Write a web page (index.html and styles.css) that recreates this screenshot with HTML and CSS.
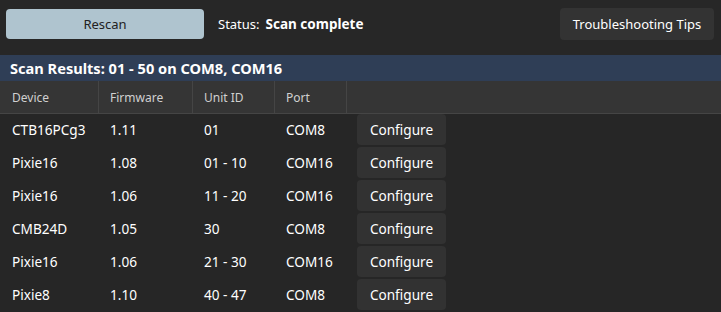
FILE: index.html
```html
<!DOCTYPE html>
<html>
<head>
<meta charset="utf-8">
<link rel="stylesheet" href="styles.css">
</head>
<body>
<div class="app">
  <div class="toolbar">
    <button class="btn rescan">Rescan</button>
    <div class="status">Status:<b>Scan complete</b></div>
    <button class="btn tips">Troubleshooting Tips</button>
  </div>
  <div class="results-title">Scan Results: 01 - 50 on COM8, COM16</div>
  <div class="thead">
    <div class="th">Device</div>
    <div class="th">Firmware</div>
    <div class="th">Unit ID</div>
    <div class="th">Port</div>
    <div class="th"></div>
  </div>
  <div class="tbody">
    <div class="tr"><div class="td">CTB16PCg3</div><div class="td">1.11</div><div class="td">01</div><div class="td">COM8</div><div class="td act"><button class="btn cfg">Configure</button></div></div>
    <div class="tr"><div class="td">Pixie16</div><div class="td">1.08</div><div class="td">01 - 10</div><div class="td">COM16</div><div class="td act"><button class="btn cfg">Configure</button></div></div>
    <div class="tr"><div class="td">Pixie16</div><div class="td">1.06</div><div class="td">11 - 20</div><div class="td">COM16</div><div class="td act"><button class="btn cfg">Configure</button></div></div>
    <div class="tr"><div class="td">CMB24D</div><div class="td">1.05</div><div class="td">30</div><div class="td">COM8</div><div class="td act"><button class="btn cfg">Configure</button></div></div>
    <div class="tr"><div class="td">Pixie16</div><div class="td">1.06</div><div class="td">21 - 30</div><div class="td">COM16</div><div class="td act"><button class="btn cfg">Configure</button></div></div>
    <div class="tr"><div class="td">Pixie8</div><div class="td">1.10</div><div class="td">40 - 47</div><div class="td">COM8</div><div class="td act"><button class="btn cfg">Configure</button></div></div>
  </div>
</div>
</body>
</html>
```
FILE: styles.css
```css
* { box-sizing: border-box; }
html, body {
  margin: 0;
  padding: 0;
  background: #272727;
  font-family: "Noto Sans", "Open Sans", sans-serif;
  color: #ffffff;
  overflow: hidden;
}
.app {
  width: 721px;
  height: 312px;
  display: flex;
  flex-direction: column;
}
.toolbar {
  height: 55px;
  display: flex;
  align-items: flex-start;
  padding: 8px 7px 0 6px;
}
.btn {
  font-family: inherit;
  border: none;
  border-radius: 4px;
  cursor: pointer;
  padding: 0;
}
.rescan {
  margin-top: 1px;
  width: 198px;
  height: 30px;
  background: #afc4cf;
  color: #222222;
  font-size: 13px;
}
.status {
  margin-left: 14px;
  height: 32px;
  display: flex;
  align-items: center;
  gap: 6px;
  font-size: 13px;
  color: #ffffff;
}
.status b { font-weight: 700; font-size: 13.5px; }
.tips {
  margin-left: auto;
  width: 154px;
  height: 32px;
  background: #333333;
  color: #ffffff;
  font-size: 13px;
}
.results-title {
  height: 26px;
  background: #2f3e56;
  padding-left: 10px;
  display: flex;
  align-items: center;
  font-weight: 700;
  font-size: 14.6px;
  color: #ffffff;
}
.thead {
  display: grid;
  grid-template-columns: 98px 94px 82px 72px 1fr;
  height: 33px;
  background: #353535;
  border-bottom: 1px solid #454545;
}
.th {
  display: flex;
  align-items: center;
  padding-left: 11px;
  font-size: 12px;
  color: #d0d0d0;
  border-left: 1px solid #454545;
}
.th:first-child { padding-left: 12px; border-left: none; }
.tbody {
  display: flex;
  flex-direction: column;
  gap: 2px;
  background: #262626;
  flex: 1;
}
.tr {
  display: grid;
  grid-template-columns: 98px 94px 82px 72px 1fr;
  height: 31px;
  align-items: center;
}
.td {
  padding-left: 12px;
  font-size: 13.6px;
  color: #ffffff;
}
.td.act { padding-left: 11px; }
.cfg {
  width: 89px;
  height: 31px;
  background: #323232;
  color: #ffffff;
  font-size: 13.6px;
  display: block;
}
```
